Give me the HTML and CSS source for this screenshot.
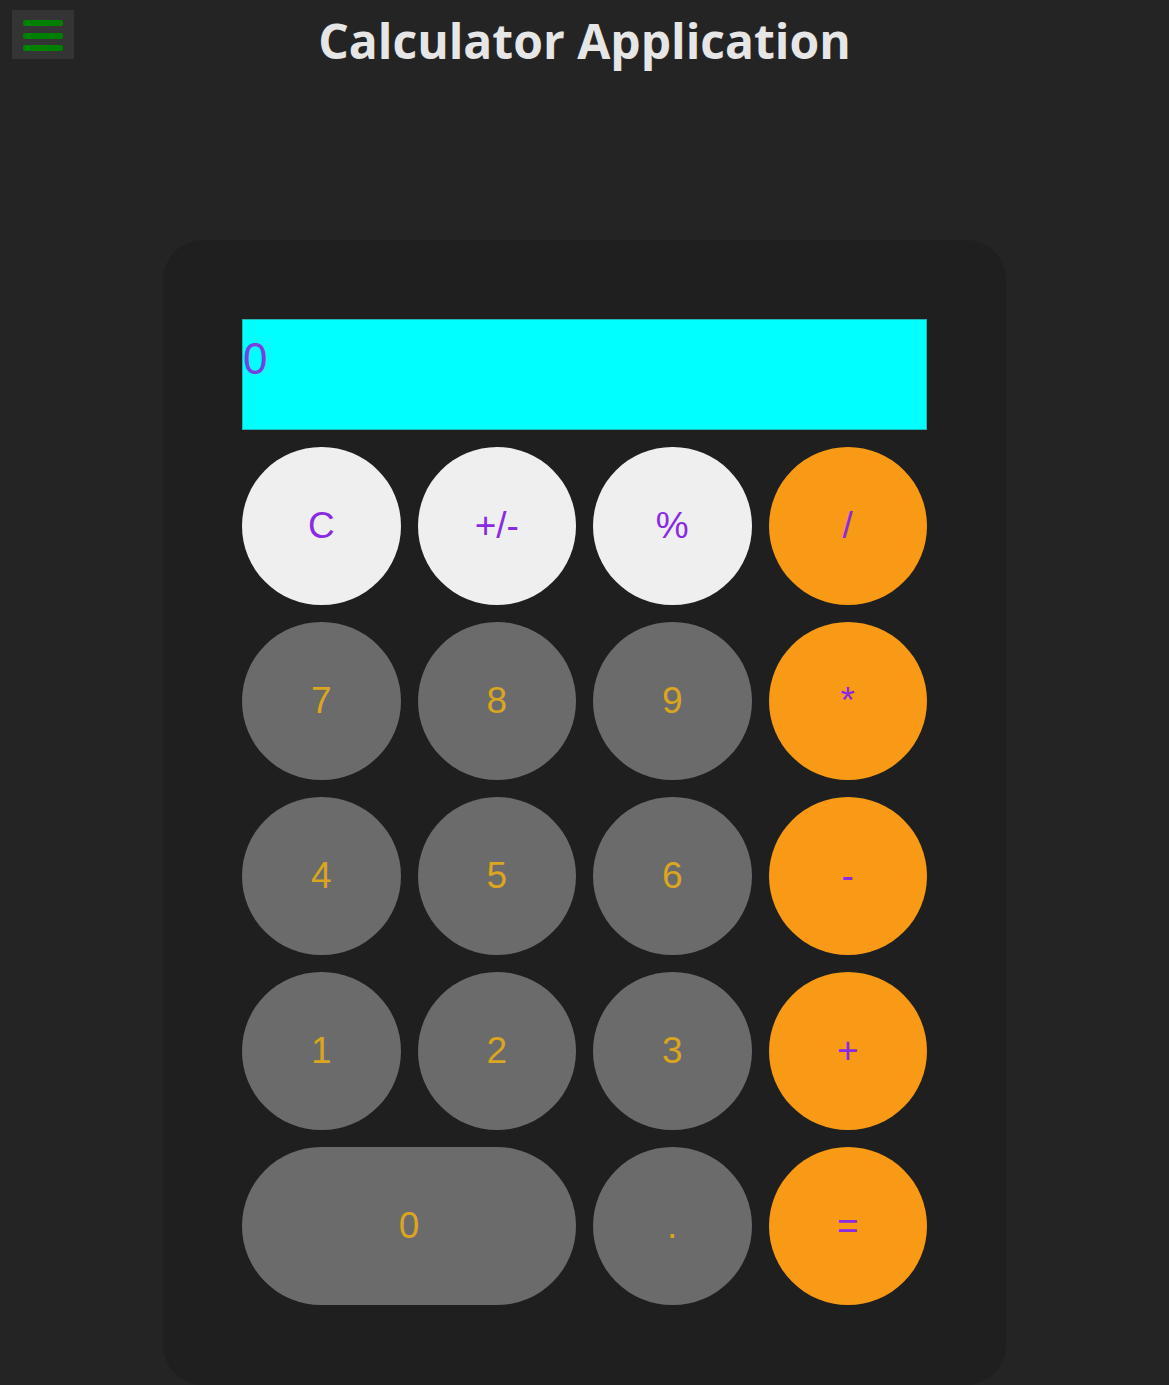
FILE: index.html
```html
<!DOCTYPE html>
<html lang="en">
<head>
<meta charset="utf-8">
<title>Calculator Application</title>
<link rel="stylesheet" href="styles.css">
</head>
<body>
<header class="topbar">
  <button class="menu" aria-label="Menu">
    <span class="bar"></span><span class="bar"></span><span class="bar"></span>
  </button>
  <h1 class="title">Calculator Application</h1>
  <div class="spacer"></div>
</header>
<main class="page">
  <section class="calculator">
    <div class="display">0</div>
    <div class="keys">
      <button class="key light">C</button>
      <button class="key light">+/-</button>
      <button class="key light">%</button>
      <button class="key op">/</button>
      <button class="key num">7</button>
      <button class="key num">8</button>
      <button class="key num">9</button>
      <button class="key op">*</button>
      <button class="key num">4</button>
      <button class="key num">5</button>
      <button class="key num">6</button>
      <button class="key op">-</button>
      <button class="key num">1</button>
      <button class="key num">2</button>
      <button class="key num">3</button>
      <button class="key op">+</button>
      <button class="key num wide">0</button>
      <button class="key num">.</button>
      <button class="key op">=</button>
    </div>
  </section>
</main>
</body>
</html>
```
FILE: styles.css
```css
html, body {
  margin: 0;
  padding: 0;
  background: #242424;
  overflow: hidden;
}
body {
  font-family: "Liberation Sans", Arial, sans-serif;
  min-height: 1385px;
}
.topbar {
  display: grid;
  grid-template-columns: 1fr auto 1fr;
  align-items: start;
  height: 88px;
}
.menu {
  justify-self: start;
  margin: 10px 0 0 12px;
  width: 62px;
  height: 49px;
  background: #343434;
  border: none;
  padding: 10px 11px 8px 11px;
  display: flex;
  flex-direction: column;
  justify-content: space-between;
}
.bar {
  display: block;
  width: 40px;
  height: 6px;
  background: #008000;
  border-radius: 2px;
}
.title {
  margin: 8px 0 0 0;
  font-family: "Open Sans", "Noto Sans", sans-serif;
  font-weight: 700;
  font-size: 48px;
  line-height: 66px;
  color: #e6e6e6;
  letter-spacing: 0;
}
.page {
  display: flex;
  justify-content: center;
  padding-top: 152px;
}
.calculator {
  width: 843px;
  box-sizing: border-box;
  padding: 79px 79px 80px 79px;
  background: #1f1f1f;
  border-radius: 40px;
}
.display {
  width: 685px;
  height: 111px;
  box-sizing: border-box;
  background: #00ffff;
  border: 1px solid #1fb5b5;
  color: #7b3ee6;
  font-size: 44px;
  line-height: 78px;
  padding-left: 0;
  margin-bottom: 17px;
}
.keys {
  width: 685px;
  display: grid;
  grid-template-columns: repeat(4, 1fr);
  grid-auto-rows: 158px;
  column-gap: 17px;
  row-gap: 17px;
}
.key {
  border: none;
  border-radius: 79px;
  font-family: "Liberation Sans", Arial, sans-serif;
  font-size: 37px;
  padding: 0;
  cursor: pointer;
}
.light {
  background: #efefef;
  color: #8a2be2;
}
.num {
  background: #6b6b6b;
  color: #daa520;
}
.op {
  background: #f89a15;
  color: #8a2be2;
}
.wide {
  grid-column: span 2;
}
```
